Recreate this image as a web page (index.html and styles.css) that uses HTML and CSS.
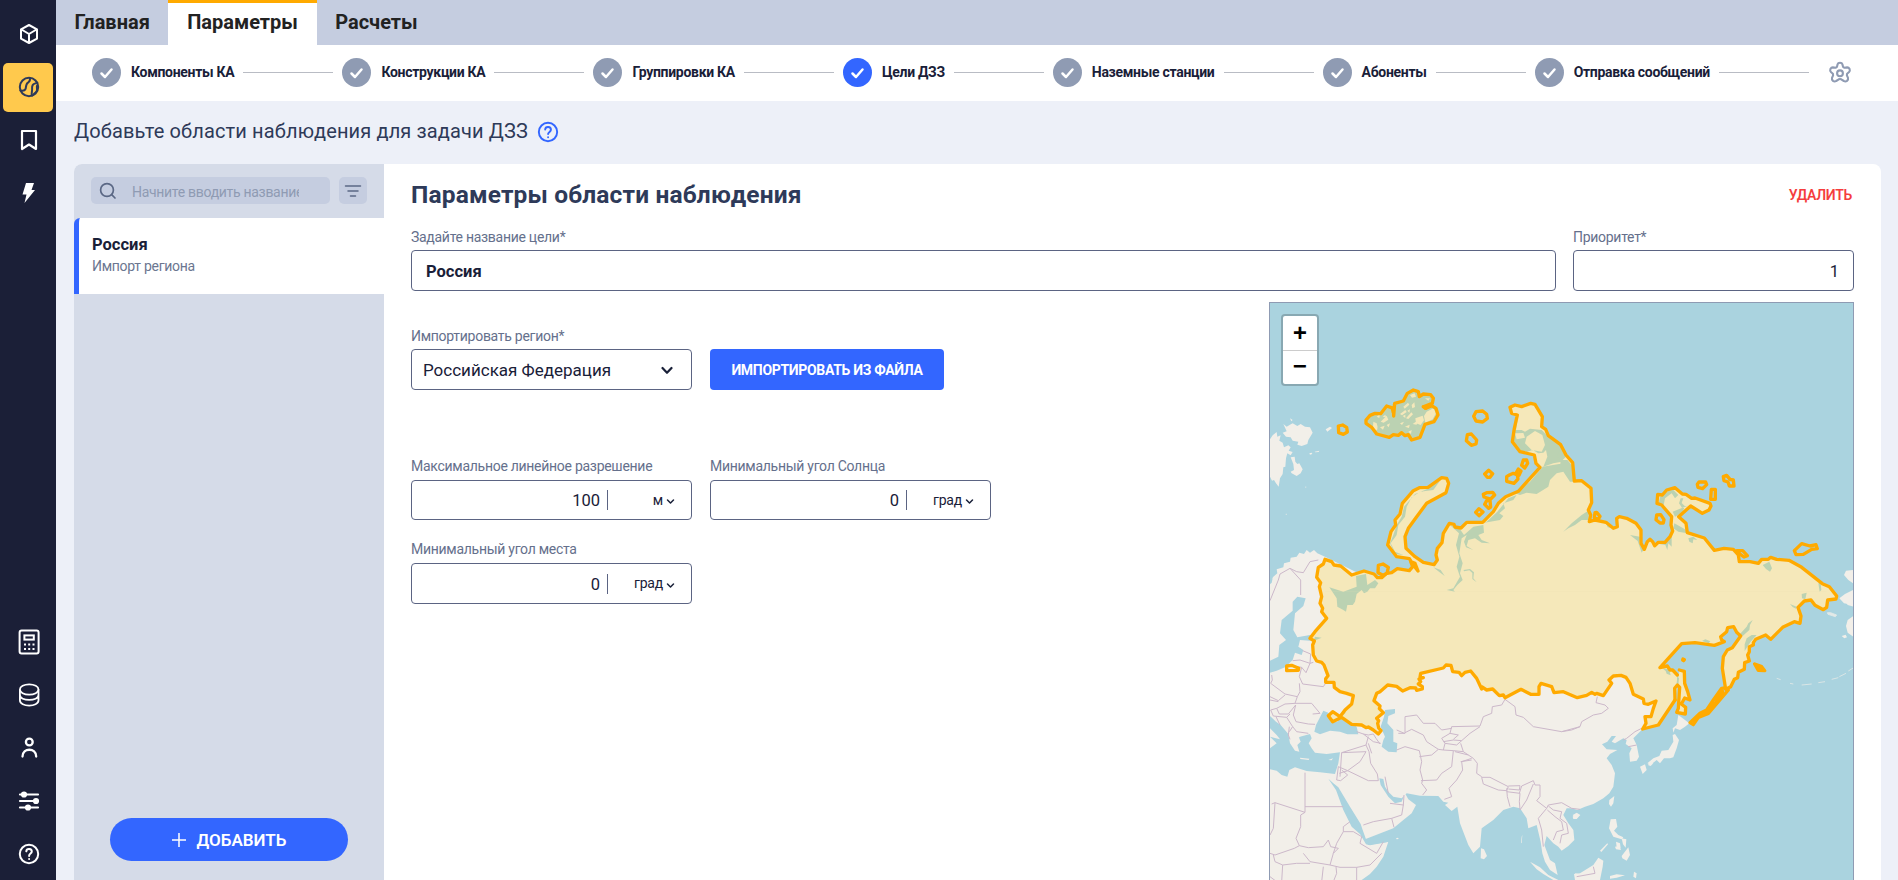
FILE: index.html
```html
<!DOCTYPE html>
<html lang="ru">
<head>
<meta charset="utf-8">
<title>Параметры — Цели ДЗЗ</title>
<link rel="stylesheet" href="styles.css">
</head>
<body>
<div class="app">
  <nav class="sidebar">
    <a class="nav-item"><svg width="24" height="24" viewBox="0 0 24 24" fill="none" stroke="#fff" stroke-width="2" stroke-linejoin="round"><path d="M12 3l8 4.300v9.400L12 21l-8-4.300V7.300zM4.500 7.500L12 12l7.500-4.500M12 12v9"/></svg></a>
    <a class="nav-item nav-item--active"><svg width="24" height="24" viewBox="0 0 24 24" fill="none" stroke="#2e3a59" stroke-width="2" stroke-linecap="round" stroke-linejoin="round"><circle cx="12" cy="12" r="9.200"/><path d="M3.500 15.500c3.500.5 5-.3 5.300-2.500.3-2.500.2-4.500 2.500-5.700 1.500-.8 1.900-2 1.700-4.200M15 20.700c-.9-3 .3-4.300.1-6.500-.2-2.500 0-5 2.600-5.600 1.300-.3 2.200-.6 2.600-1.100M17 19c.8-1.500 2.800-1.500 3-4 .2-2-.6-3 .2-4.500"/></svg></a>
    <a class="nav-item"><svg width="24" height="24" viewBox="0 0 24 24" fill="none" stroke="#fff" stroke-width="2.200" stroke-linejoin="round"><path d="M5 3h14v18l-7-4.500L5 21z"/></svg></a>
    <a class="nav-item"><svg width="24" height="24" viewBox="0 0 24 24" fill="#fff"><path d="M9 2h8l-2.500 7H18L7.500 22 9.500 13.500H5.500z"/></svg></a>
    <div class="nav-spacer"></div>
    <a class="nav-item"><svg width="24" height="28" viewBox="0 0 24 28" fill="none" stroke="#fff" stroke-width="2"><rect x="2.600" y="2.500" width="19" height="23" rx="2"/><rect x="7.400" y="7.400" width="9.400" height="4.200"/><g stroke-width="2"><path d="M7 16.500h2M11.200 16.500h2M15.500 16.500h2M7 21h2M11.200 21h2M15.500 21h2"/></g></svg></a>
    <a class="nav-item"><svg width="24" height="24" viewBox="0 0 24 24" fill="none" stroke="#fff" stroke-width="1.800"><ellipse cx="12.200" cy="6.500" rx="9.300" ry="5.200"/><path d="M2.900 6.500v10.800c0 7 18.600 7 18.600 0V6.500M2.900 12c0 6.600 18.600 6.600 18.600 0"/></svg></a>
    <a class="nav-item"><svg width="24" height="24" viewBox="0 0 24 24" fill="none" stroke="#fff" stroke-width="2.300" stroke-linecap="round"><circle cx="12.300" cy="6" r="3.400"/><path d="M5.500 20.500c0-9 13.700-9 13.700 0"/></svg></a>
    <a class="nav-item"><svg width="24" height="24" viewBox="0 0 24 24" fill="#fff" stroke="#fff" stroke-width="2.200" stroke-linecap="round"><path d="M3 5.500h18M3 12h18M3 18.500h18"/><circle cx="7" cy="5.500" r="2"/><circle cx="19" cy="12" r="2"/><circle cx="11" cy="18.500" r="2"/></svg></a>
    <a class="nav-item"><svg width="24" height="24" viewBox="0 0 24 24" fill="none" stroke="#fff" stroke-width="2" stroke-linecap="round"><circle cx="12" cy="12" r="9.200"/><path d="M9.300 9.300c.3-3.300 5.600-3 5.500.3 0 2-2.700 2-2.700 4.300M12.100 16.900v.1"/></svg></a>
  </nav>

  <main class="main">
    <header class="tabs">
      <a class="tab">Главная</a>
      <a class="tab tab--active">Параметры</a>
      <a class="tab">Расчеты</a>
    </header>

    <section class="stepper">
      <div class="step"><span class="dot"><svg width="15" height="12" viewBox="0 0 15 12"><path d="M2.500 6.500l3.500 3.500 6.500-7.500"/></svg></span><b>Компоненты КА</b></div><i class="line"></i>
      <div class="step"><span class="dot"><svg width="15" height="12" viewBox="0 0 15 12"><path d="M2.500 6.500l3.500 3.500 6.500-7.500"/></svg></span><b>Конструкции КА</b></div><i class="line"></i>
      <div class="step"><span class="dot"><svg width="15" height="12" viewBox="0 0 15 12"><path d="M2.500 6.500l3.500 3.500 6.500-7.500"/></svg></span><b>Группировки КА</b></div><i class="line"></i>
      <div class="step"><span class="dot dot--current"><svg width="15" height="12" viewBox="0 0 15 12"><path d="M2.500 6.500l3.500 3.500 6.500-7.500"/></svg></span><b>Цели ДЗЗ</b></div><i class="line"></i>
      <div class="step"><span class="dot"><svg width="15" height="12" viewBox="0 0 15 12"><path d="M2.500 6.500l3.500 3.500 6.500-7.500"/></svg></span><b>Наземные станции</b></div><i class="line"></i>
      <div class="step"><span class="dot"><svg width="15" height="12" viewBox="0 0 15 12"><path d="M2.500 6.500l3.500 3.500 6.500-7.500"/></svg></span><b>Абоненты</b></div><i class="line"></i>
      <div class="step"><span class="dot"><svg width="15" height="12" viewBox="0 0 15 12"><path d="M2.500 6.500l3.500 3.500 6.500-7.500"/></svg></span><b>Отправка сообщений</b></div><i class="line"></i>
      <svg class="gear" width="24" height="24" viewBox="0 0 24 24" fill="none" stroke="#8f9bb3" stroke-width="2.100" stroke-linejoin="round"><circle cx="12" cy="12.300" r="2.900"/><path d="M9.600 3.300Q10 1.700 12 1.700t2.400 1.600l.7 2.600 1.400.9 2.700-.4q1.500 0 2.400 1.700.7 1.900-.5 2.900l-2 1.700-.2 1.600 1.100 2.500q.5 1.800-1 3.100-1.600 1.100-3.100.1L13.200 18.300q-1.200-.6-2.400 0L8.100 20q-1.500 1-3.100-.1-1.500-1.300-1-3.100l1.100-2.500-.2-1.600-2-1.700q-1.200-1-.5-2.900.9-1.700 2.400-1.700l2.700.4 1.400-.9z"/></svg>
    </section>

    <h1 class="page-title">Добавьте области наблюдения для задачи ДЗЗ
      <svg width="22" height="22" viewBox="0 0 24 24" fill="none" stroke="#3366ff" stroke-width="2.100" stroke-linecap="round"><circle cx="12" cy="12" r="10"/><path d="M8.900 9.300c.3-4 6.400-3.600 6.300.3 0 2.300-3.100 2.300-3.100 4.700M12.100 17.600v.1"/></svg>
    </h1>

    <section class="card">
      <aside class="list">
        <div class="search-row">
          <div class="search"><svg width="18" height="18" viewBox="0 0 18 18" fill="none" stroke="#5b6885" stroke-width="1.700" stroke-linecap="round"><circle cx="8" cy="8" r="6.400"/><path d="M12.700 12.700L16 16"/></svg><input class="search-input" placeholder="Начните вводить название"></div>
          <div class="filter"><svg width="18" height="14" viewBox="0 0 18 14" stroke="#5b6885" stroke-width="1.500" stroke-linecap="round"><path d="M1.500 2h15M4 7h10M6.500 12h5"/></svg></div>
        </div>
        <div class="target"><strong>Россия</strong><span>Импорт региона</span></div>
        <button class="add"><svg width="14" height="14" viewBox="0 0 14 14" stroke="#fff" stroke-width="1.500"><path d="M7 0v14M0 7h14"/></svg>ДОБАВИТЬ</button>
      </aside>

      <div class="details">
        <div class="details-head"><h2>Параметры области наблюдения</h2><a class="delete">УДАЛИТЬ</a></div>
        <div class="name-row">
          <div class="field field--name"><label>Задайте название цели*</label><div class="input input--name">Россия</div></div>
          <div class="field"><label>Приоритет*</label><div class="input input--number">1</div></div>
        </div>
        <div class="body-row">
          <div class="form">
            <div class="form-row form-row--region">
              <div class="field"><label>Импортировать регион*</label><div class="input select">Российская Федерация<svg width="12" height="9" viewBox="0 0 12 9" fill="none" stroke="#192038" stroke-width="2.200" stroke-linecap="round" stroke-linejoin="round"><path d="M1.500 2L6 6.800 10.500 2"/></svg></div></div>
              <button class="import">ИМПОРТИРОВАТЬ ИЗ ФАЙЛА</button>
            </div>
            <div class="form-row form-row--limits">
              <div class="field"><label>Максимальное линейное разрешение</label><div class="input unit"><span class="value">100</span><span class="measure">м<svg width="9" height="7" viewBox="0 0 9 7"><path d="M1.500 2l3 3 3-3"/></svg></span></div></div>
              <div class="field"><label>Минимальный угол Солнца</label><div class="input unit"><span class="value">0</span><span class="measure">град<svg width="9" height="7" viewBox="0 0 9 7"><path d="M1.500 2l3 3 3-3"/></svg></span></div></div>
            </div>
            <div class="form-row form-row--place">
              <div class="field"><label>Минимальный угол места</label><div class="input unit"><span class="value">0</span><span class="measure">град<svg width="9" height="7" viewBox="0 0 9 7"><path d="M1.500 2l3 3 3-3"/></svg></span></div></div>
            </div>
          </div>

          <div class="map">
            <svg class="map-canvas" width="583" height="577" viewBox="30 39 1749 1731">
              <defs>
                <path id="mainland" d="M1245 1230L1195 1305 1148 1317 1158 1300 1155 1280 1173 1280 1180 1255 1188 1233 1165 1243 1152 1240 1150 1227 1120 1213 1110 1180 1098 1162 1083 1156 1060 1158 1047 1170 1055 1180 1030 1217 1010 1210 1005 1213 995 1207 980 1216 952 1223 910 1205 882 1208 875 1190 843 1180 837 1190 837 1213 812 1213 783 1198 735 1223 730 1215 718 1217 698 1197 680 1200 665 1190 665 1197 650 1165 632 1143 615 1147 605 1157 597 1147 578 1145 573 1126 558 1125 550 1134 482 1150 480 1162 490 1163 477 1167 482 1175 475 1182 487 1190 487 1197 470 1201 467 1194 450 1193 428 1203 410 1189 383 1185 360 1205 350 1210 342 1232 360 1248 358 1256 370 1268 350 1285 356 1292 353 1300 356 1314 363 1322 355 1332 340 1320 325 1311 318 1313 305 1305 275 1303 245 1282 218 1295 205 1277 218 1265 240 1280 255 1260 275 1242 280 1217 260 1210 240 1205 223 1192 222 1177 197 1177 197 1166 204 1157 192 1125 185 1117 170 1113 160 1095 158 1065 163 1053 150 1045 165 1025 200 985 185 965 188 955 180 940 185 920 178 890 182 878 170 862 175 832 190 822 195 808 215 815 222 825 242 828 275 855 312 843 342 852 352 863 365 863 380 850 395 848 412 836 448 842 458 830 452 815 465 820 474 843 460 825 448 806 410 800 383 765 393 725 407 705 405 690 420 672 427 640 460 602 478 593 504 592 545 563 560 565 566 580 558 608 500 640 470 680 445 715 435 740 438 775 465 800 490 817 522 824 532 810 528 795 532 775 546 758 550 730 568 700 582 703 585 711 603 714 620 697 668 697 700 665 715 640 737 620 775 604 840 532 828 520 823 495 780 485 757 455 763 415 772 375 755 370 750 352 765 345 785 350 812 340 825 343 847 380 845 410 857 418 865 437 902 464 918 495 938 518 943 573 965 572 993 595 995 638 985 660 992 675 988 695 1005 690 1038 697 1060 715 1072 710 1070 685 1078 680 1100 685 1128 700 1143 720 1143 760 1153 778 1162 755 1170 748 1178 755 1184 767 1195 757 1215 757 1230 740 1238 723 1233 705 1235 680 1205 645 1191 640 1193 613 1207 615 1220 600 1245 593 1267 612 1278 613 1295 625 1305 624 1350 640 1353 648 1347 660 1327 670 1292 648 1256 680 1278 700 1282 728 1333 744 1363 781 1392 775 1420 778 1435 795 1438 815 1470 815 1495 820 1505 808 1525 808 1532 802 1550 808 1587 811 1625 832 1687 881 1708 890 1730 918 1728 927 1703 930 1700 952 1690 959 1665 946 1653 930 1633 933 1614 952 1623 978 1620 1000 1603 995 1568 1012 1532 1048 1517 1035 1487 1048 1480 1058 1480 1065 1468 1070 1468 1085 1463 1095 1468 1113 1454 1118 1453 1138 1435 1147 1433 1163 1423 1168 1412 1190 1397 1198 1387 1135 1390 1100 1402 1080 1417 1073 1442 1038 1430 1027 1421 1010 1403 1013 1400 1025 1382 1040 1385 1050 1393 1055 1363 1066 1305 1058 1265 1061 1200 1133 1222 1128 1230 1140 1238 1140 1252 1155"/>
                <path id="sakhalin" d="M1258 1140L1273 1144 1274 1180 1283 1205 1290 1230 1274 1224 1264 1242 1277 1252 1276 1272 1250 1267 1255 1255 1259 1192 1252 1185 1244 1195 1245 1230"/>
              </defs>
              <rect x="30" y="39" width="1749" height="1731" fill="#aad3df"/>
              <!-- continents -->
              <g fill="#f2efe9">
                <path d="M30 875L40 860 52 850 50 838 70 832 72 820 90 815 92 803 110 800 118 788 132 792 140 780 150 788 162 780 172 790 195 800 600 1000 1100 1100 1200 1133 1252 1155 1245 1230 1195 1305 1148 1317 1135 1330 1120 1345 1130 1365 1137 1400 1130 1412 1110 1415 1108 1390 1115 1375 1097 1362 1100 1350 1090 1345 1065 1360 1055 1355 1068 1338 1055 1338 1042 1355 1026 1363 1040 1378 1072 1380 1050 1392 1040 1405 1055 1425 1065 1450 1060 1490 1048 1510 1030 1525 1000 1542 975 1550 952 1560 935 1555 920 1555 910 1575 925 1600 940 1620 943 1650 925 1668 905 1682 895 1670 880 1660 860 1638 853 1665 870 1710 885 1720 893 1755 870 1740 855 1715 847 1690 842 1655 830 1605 805 1615 800 1585 780 1555 760 1550 730 1560 700 1590 665 1615 660 1670 640 1690 625 1665 600 1600 592 1550 575 1563 555 1545 565 1538 550 1535 535 1518 480 1517 440 1510 425 1525 400 1520 385 1505 375 1490 370 1467 358 1465 362 1485 385 1520 405 1540 425 1535 435 1510 445 1528 468 1545 455 1570 430 1590 400 1615 315 1648 325 1665 385 1655 370 1700 350 1730 330 1752 305 1770H30Z"/>
                <path d="M30 448L38 436 50 426 52 440 62 436 58 452 68 458 72 472 85 466 92 472 86 482 98 486 92 496 82 490 78 505 76 530 70 532 68 552 60 565 56 590 48 580 42 570 36 572 30 560ZM70 402L80 410 90 404 98 400 112 408 122 402 135 410 150 412 158 428 150 442 145 450 142 462 125 468 112 464 115 455 98 452 92 442 78 440 68 428 80 424ZM92 502L104 500 106 515 112 522 118 520 128 538 122 550 110 558 95 550 92 545 102 540 100 522ZM197 418L210 410 216 414 202 425ZM148 490l7-2 2 4-7 2zM164 485l14-3-2 4-10 1zM76 672l4-1v4zM135 590l4 0-1 4zM90 385l8 5-4 4z"/>
                <!-- island chains of the Pacific coast -->
                <g transform="translate(900,930)">
                  <path d="M355 345L362 350 388 370 375 380 360 390 345 385 340 398 338 385 350 375ZM345 402L357 420 350 445 340 472 330 475 312 475 300 490 290 480 275 492 262 490 280 475 298 468 305 452 325 450 340 425 338 405ZM240 500L255 493 260 510 248 522ZM265 488l15 2-8 8-7-2zM148 600L163 588 160 610 153 620 147 612ZM38 650L50 638 61 645 50 657 40 657ZM152 658L168 657 172 680 162 692 175 705 190 712 185 718 160 710 147 685ZM168 725l12 5 2 15-12-3zM185 715l14 3-2 25-8-10zM165 740l13-2 5 12-15-2zM185 768L205 742 210 765 200 782 187 775ZM120 752l22-22 2 3-20 23zM42 822L60 820 100 795 115 773 130 782 128 800 120 840H45ZM150 828l20-5 25 3-25 7-20 3zM222 815l8 5-2 15-8-5zM853 0l10 15 18 5V-20zM880 48l-17 12-5 18 5 20 17 12zM845 108l12-4 4 8-8 3z"/>
                  <path d="M802 38L812 38 830 45 826 50 804 43ZM650 235l12 4M690 250l10 2M725 255l30-3M775 248l20-3M815 238l20-5M838 230l20-10M865 213l16-10" stroke="#f2efe9" stroke-width="2.500" opacity=".8"/>
                </g>
                <path d="M1779 840L1758 842 1752 855 1765 870 1779 880ZM1779 900L1755 912 1738 925 1752 940 1779 945Z"/>
                <g transform="translate(0,870)"><path d="M663 805L672 808 681 828 672 838 662 835ZM810 845L840 862 865 885 895 900H880L850 882 830 868ZM938 705L948 700 958 705 948 717ZM785 770l2-5-2 25-2-2zM408 775l6-2 2 4-6 1zM945 880l12 2v8l-10-2z"/></g>
              </g>
              <!-- inland seas -->
              <g transform="translate(0,870)" fill="#aad3df">
                <path d="M30 408L48 425 62 435 85 462 92 478 105 483 120 470 150 462 155 475 146 490 155 505 165 518 200 522 240 517 235 550 225 582 180 577 140 573 105 562 88 570 82 590 65 585 50 572 30 568V505L50 490 30 470 60 478 50 465 30 445Z"/>
                <path d="M190 392L205 398 215 425 232 425 240 402 262 388 255 408 250 415 290 440 295 463 262 463 240 455 210 452 180 463 163 455 168 435ZM375 390L405 387 405 400 385 408 382 430 400 450 400 485 412 490 410 517 385 515 365 500 370 480 375 470 362 440 372 410Z"/>
                <path d="M112 50L137 55 130 78 105 100 100 150 112 172 150 165 185 170 150 182 120 180 115 200 130 210 125 225 105 218 98 240 75 262 50 272 30 278V242L55 230 58 195 78 180 60 160 65 120 98 92 98 65Z"/>
                <path d="M205 596L220 610 235 622 270 680 302 732 308 750 318 778 390 765 388 785 330 796 318 793 300 762 275 740 250 690 228 630Z"/>
                <path d="M30 0l8-5-3 13-5 5z"/>
              </g>
              <g transform="translate(0,870)" fill="#f2efe9"><path d="M85 462L115 468 122 485 112 495 118 515 105 512 90 490ZM120 533l28 3-2 4-25-3zM205 540l14-5-4 6zM165 465h-8l25-3z"/></g>
              <!-- country borders -->
              <g transform="translate(0,870)" fill="none" stroke="#ccb8ca" stroke-width="3" stroke-linejoin="round">
                <path d="M30 62L55 0 60-18 90-35 122 0V45M90-35L110-25 130-22 150-55 175-60M98 242L120 240 150 250 152 222 128 212M150 250L160 247M100 258L125 262 138 278 150 250M125 262L118 290 128 312 190 320 200 305M35 285L37 300 32 310 75 342 112 350 120 335 118 310M30 350L55 362 75 345M112 350L105 370 75 372 50 385 58 402 85 402 107 375M105 370L155 370 180 400 158 402M107 375L100 405 108 425 145 432 165 433M30 360L55 365M50 385L32 390 40 408 80 412 98 440 88 455M60 435L48 410M80 412L90 402M98 440L110 455 145 460M88 440L85 465 90 478"/>
                <path d="M290 455L310 462 340 485 362 490M310 462L325 465 340 462 348 475 360 492M325 470L318 495 245 518 240 590M318 515L245 518M318 495L327 515 332 550 352 582 355 602 325 602 263 572 238 580M263 572L235 560 230 600 242 602 263 585 245 570M263 572L300 545 318 515M325 490L335 520M410 510L435 500 478 512 485 545 480 570 488 600 485 610 500 630 488 645M415 460H435V410L470 405 490 430 525 430 545 450 575 445M435 458L455 448 490 465 500 485 535 508 550 510M433 460L410 450M478 530L515 525 535 508M550 510L555 490 545 475 570 460 575 440 660 438 670 410 695 400 697 380 725 375 735 358M550 485L580 480 605 482 590 495 555 490M570 460L595 465 580 478M605 482L630 460 660 440M550 510L580 512 575 560 545 580 530 600 483 602M580 512L610 515 602 490M585 515L625 525M610 515L640 535 652 550 650 580 665 590M602 545L635 540M635 535L605 545 608 570 590 600 567 625 575 650 553 658M665 592L690 592 745 620 740 632 715 630 670 612ZM745 618L780 617 778 630 745 627M740 625L742 650 750 680M740 635L780 640 778 665 780 688M778 640L785 618 820 602 825 615 840 615 840 650 830 662 860 685 865 675 905 668 935 685 960 688M780 690L800 660 820 612M860 685L835 715 845 750 850 800M862 690L885 710 905 725 910 750 890 755 880 780M865 678L880 690 905 695 900 715 920 730 925 760 905 765 900 790M735 358L765 380 768 405 790 412 820 440 905 455 960 440"/>
                <path d="M135 578V697L45 668 35 672M135 680H250M135 697L122 705V740L108 775 118 797 103 805 45 825 30 820M118 797L145 803 190 800 205 780 212 800 235 805 220 820 210 855 150 845 130 820M45 668L40 745 30 765M220 820L230 790 250 755 280 755 305 770 300 790 350 820 370 785M250 755V740L270 725M210 855L240 862 290 862V900M290 862L330 855 365 820M220 905L230 880 228 860M190 860L185 905M65 905L68 855 45 845 40 825M68 855L110 850 150 850M30 890L50 905M310 735L340 725 395 715 425 705 430 675 390 670M395 715L402 742M430 675L432 645M375 590L385 640"/>
                <path d="M1145 445L1125 455 1100 475 1090 480M1105 500L1130 495M905 455L935 450 960 440 965 425 1000 405 1025 400 1045 385 1035 375 1008 368 1012 350M1000 860L1005 880 950 890"/>
              </g>
              <g fill="#f5e8ba"><use href="#mainland"/><use href="#sakhalin"/></g>
              <!-- archipelagos -->
              <path d="M318 390L345 370 362 368 380 350 403 340 430 333 442 310 460 300 485 312 515 320 520 345 530 355 530 380 495 403 480 442 455 450 425 432 388 442 350 432Z" fill="#bbd2b2"/>
              <path d="M500 365l20-10 8 15-10 18-22 10-4-20zM466 385l22-8 4 14-10 14-14-5zM350 380l10-8-2 12zM362 395l18-18 5 12-14 9zM340 395l10 5 3 12-8 10-6-12zM360 412l14-5-5 12zM380 405l10-5-4 12zM430 350l14-12 4 6-14 12zM420 372l16-12 4 6-14 10zM438 385l16-18 5 6-14 14zM455 345l8-8 2 14-8 4zM420 400l12-5-6 10zM435 410l14-6-2 10zM458 402l14-10-2 12zM450 315l14-5 4 10-12 3zM495 325l15 0-5 7zM445 425l10-5-2 12zM368 380l8-6 2 8zM345 408l8 8-4 6zM428 378l8-4 0 10zM442 362l8-4-2 10z" fill="#f5e8ba"/>
              <!-- lowland water seen through the region fill -->
              <g fill="#bbd2b2">
                <path d="M390 760L400 735 410 705 425 680 432 650 465 612 500 598 540 572 520 600 480 605 455 622 440 650 435 680 415 705 410 735 392 760 405 785 430 795 405 792ZM570 705L600 718 612 735 640 710 670 705 672 728 655 735 665 750 690 760 665 758 645 745 625 750 620 768 640 780 618 772 612 755 620 735 605 745 598 790 608 820 600 850 608 870 592 885 580 900 585 905 560 900 580 895 600 860 590 830 598 800 588 765 597 730ZM610 840l20-3 12 10-2 18 10 12-13-10 0-18-9-8-15 3zM520 832l22 8 12 18-20-15zM288 858L318 852 322 885 345 870 355 880 345 895 330 895 322 905 312 910 305 900 290 912 285 935 278 945 262 945 258 965 250 960 232 950 230 925 208 892 250 905 290 890Z"/>
                <path d="M765 375L775 378 768 420 785 420 795 425 810 416 845 420 855 430 870 445 880 440 885 450 905 470 915 495 905 515 880 520 850 530 862 500 858 480 850 488 835 490 818 480 800 486 780 482 760 455ZM765 430l5 18 25-5-5-14zM800 440l-5 20 20 20 30 5 10-20-8-30-22-12z" fill-rule="evenodd"/>
                <path d="M848 530L910 520 935 525 940 575 930 575 910 545 890 550 870 570 865 590 830 612 800 608 780 615 765 610 790 590 810 575ZM770 615L745 625 712 665 680 695 665 700 720 690 730 678 718 670 735 655 730 640 760 630ZM910 725L935 700 965 675 988 660 985 690 965 690 945 705 925 715ZM890 500L905 470 918 500 908 510ZM902 510h20l18 20v40l-15-5-10-25-15-8z"/>
                <path d="M1200 620L1195 645 1210 650 1215 625 1235 610 1245 625 1255 615 1235 595 1215 610ZM1238 665L1275 650 1265 670 1245 680ZM1262 625l-5 15 10 15 16-8-8 2-10-10 5-14zM1243 700L1275 718 1282 730 1255 725 1240 715ZM1185 760l25-5 20-15 5-10 0 40-10-10-3 20-6-15zM1285 745l15-5 12 10-12-2-2 12-10-5zM1110 735l30 5-2 20 12 20-5 8-12-35zM1038 700l20 15-15-3zM1508 825l20-10 8 20-6 10-12-8zM1675 880l4 25 5-5-2-22zM1625 912l15-4-4 20-10-3zM1590 942l20 8-2 6-10-5zM1465 1000L1478 990 1470 1005 1468 1020 1448 1038 1440 1032 1460 1010ZM1460 1045l15-10 15 0-18 20-18 28 0-20zM1326 1053l10-5 15 6-5 6zM1207 1135l20 3 5 18-12-5-3-8zM1252 1160l5 5-2 20-5-5z"/>
                <path d="M165 1040l20 3-25 10zM245 1275l15-15-6 12z"/>
              </g>
              <path d="M195 904H1700" stroke="#eee2b6" stroke-width="1" opacity=".5"/>
              <!-- region outline -->
              <g fill="none" stroke="#ffaa00" stroke-width="10" stroke-linejoin="round" stroke-linecap="round">
                <use href="#mainland"/><use href="#sakhalin"/>
                <path d="M318 390L330 376 345 370 362 371 380 348 400 355 401 378 404 340 430 333 442 310 460 300 475 305 478 320 490 312 512 314 520 325 517 340 492 350 498 355 515 347 528 355 534 375 522 395 495 403 480 442 455 450 445 434 435 437 425 428 415 436 400 434 388 442 350 432 335 412 318 400Z"/>
                <path d="M235 408l13-3 12 7 2 14-12 7-14-5zM648 365l20-2 12 10 2 12-14 11-20-3-7-14zM622 434l12-2 16 18-2 12-14 4-15-14zM686 541l12 10-8 11h-8l-8-10zM790 510h10l3 10-9 14-9-8zM748 555l12-5 12 5 2 12-12 13-22-6 0-14zM775 537l8 6-6 13-8-8zM680 608l18-1 6 8-12 12-20-6-2-8zM680 632l10-1 2 20-6 4-12-12zM657 656l12 10-12 11-10-10zM355 826l14-4 16 10-4 18-12 6-15-8z"/>
                <path d="M1005 668l5-1 10 12-5 8-12-3zM1190 675l12-1 10 15-2 10-10 0-12-10zM1354 598h12v30h-14zM1390 560l10-4 10 12 10 2 2 18h-14l-4-12-12-4zM1312 583l5-7h20l3 8-12 12-14-4zM1430 782l18 0 14 15-10 4-14-10zM1603 782L1625 761 1650 768 1668 764 1672 776 1655 778 1630 793 1608 794ZM80 1128L95 1126 116 1135 115 1141 80 1142Z"/>
                <path d="M1394 1194L1385 1195 1360 1230 1340 1260 1320 1270 1290 1298 1300 1304 1315 1282 1345 1270 1375 1235 1405 1200M1388 1204L1366 1240 1340 1264 1318 1276"/>
                <path d="M1484 1122L1505 1130 1514 1142 1495 1141ZM1269 1107l4 2-2 3-3-2zM490 350l10 0-4 5zM397 355l3 12" fill="#ffaa00"/>
              </g>
            </svg>
            <div class="zoom"><span class="zoom-btn">+</span><span class="zoom-btn">−</span></div>
          </div>
        </div>
      </div>
    </section>
  </main>
</div>
</body>
</html>
```

FILE: styles.css
```css
* { box-sizing: border-box; }
body { margin: 0; font-family: Roboto, "Liberation Sans", sans-serif; color: #192038; }
h1, h2 { margin: 0; }
button { border: 0; padding: 0; font-family: inherit; color: #fff; background: #3366ff; }
svg { display: block; flex: none; }

.app { display: flex; height: 880px; overflow: hidden; background: #edf0f8; }

.sidebar { width: 56px; flex: none; display: flex; flex-direction: column; align-items: center; gap: 4px; padding-top: 10px; padding-bottom: 1px; background: #1b1f37; }
.nav-item { width: 50px; height: 49px; flex: none; display: flex; align-items: center; justify-content: center; border-radius: 5px; padding: 0 0 1px 2px; }
.nav-item--active { background: #ffc94d; }
.nav-spacer { flex: 1; }

.main { flex: 1; min-width: 0; display: flex; flex-direction: column; }
.tabs { display: flex; height: 45px; background: #c5cde0; }
.tab { height: 45px; padding: 0 18.5px; font-size: 20px; font-weight: 700; line-height: 45px; color: #222; }
.tab--active { background: #fff; border-top: 3px solid #ffaa00; line-height: 39px; padding: 0 18.800px; }

.stepper { height: 56px; flex: none; display: flex; align-items: center; padding: 0 46px 1px 36px; background: #fff; }
.step { display: flex; align-items: center; gap: 10px; font-size: 14px; letter-spacing: -.3px; white-space: nowrap; }
.step b { font-weight: 700; padding-bottom: 1px; }
.dot { width: 29px; height: 29px; border-radius: 50%; background: #8f9bb3; display: flex; align-items: center; justify-content: center; }
.dot--current { background: #3366ff; }
.dot path { fill: none; stroke: #fff; stroke-width: 2.500; stroke-linecap: round; stroke-linejoin: round; }
.line { flex: 1; height: 1px; margin: 0 9px; background: #b9bcc4; }
.gear { margin-left: 10px; }

.page-title { height: 63px; flex: none; display: flex; align-items: center; gap: 9px; padding: 0 0 3px 18px; font-size: 20px; font-weight: 400; letter-spacing: .13px; color: #2e3a59; }
.page-title svg { margin-top: 2px; }

.card { flex: 1; min-height: 0; display: flex; margin: 0 17px 0 18px; border-radius: 8px 8px 0 0; overflow: hidden; background: #fff; }
.list { width: 310px; flex: none; display: flex; flex-direction: column; background: #d5dbe8; }
.search-row { display: flex; gap: 9px; padding: 13px 17px 14px; }
.search { width: 239px; height: 27px; display: flex; align-items: center; padding: 0 31px 0 8px; gap: 15px; border-radius: 5px; background: #c5cde0; }
.search-input { flex: 1; min-width: 0; border: 0; padding: 2px 0 0; background: none; font: 14px/18px Roboto, "Liberation Sans", sans-serif; letter-spacing: -.3px; }
.search-input::placeholder { color: #8f9bb3; opacity: 1; }
.filter { width: 28px; height: 27px; display: flex; align-items: center; justify-content: center; border-radius: 5px; background: #c5cde0; }
.target { height: 76px; display: flex; flex-direction: column; padding: 16px 0 0 13px; border-left: 5px solid #3366ff; border-top-left-radius: 6px; background: #fff; }
.target strong { font-size: 16.500px; line-height: 21px; }
.target span { font-size: 14px; line-height: 22px; letter-spacing: -.28px; color: #6b7690; }
.add { width: 238px; height: 43px; display: flex; align-items: center; justify-content: center; gap: 11px; margin: auto auto 19px 36px; border-radius: 22px; font-size: 17px; font-weight: 600; }

.details { flex: 1; min-width: 0; display: flex; flex-direction: column; padding: 0 27px; }
.details-head { height: 65px; flex: none; display: flex; align-items: center; justify-content: space-between; padding-bottom: 3px; }
h2 { font-size: 24.500px; font-weight: 700; line-height: 62px; letter-spacing: .15px; color: #2e3a59; }
.delete { font-size: 14px; font-weight: 600; letter-spacing: -.3px; color: #f53d3d; padding-right: 2px; }
.name-row { display: flex; gap: 17px; flex: none; }
.field { width: 281px; flex: none; }
.field--name { flex: 1; }
label { display: block; font-size: 14px; line-height: 16px; margin-bottom: 5px; letter-spacing: -.28px; color: #65708c; white-space: nowrap; }
.input { height: 41px; display: flex; align-items: center; border: 1px solid #5b6483; border-radius: 4px; background: #fff; font-size: 16.500px; }
.input--name { padding: 1px 0 0 14px; font-weight: 700; }
.input--number { justify-content: flex-end; padding: 1px 14px 0 0; }
.select { justify-content: space-between; padding: 1px 18px 0 11px; font-size: 17px; }

.body-row { flex: 1; min-height: 0; display: flex; justify-content: space-between; padding-top: 11px; }
.form { padding-top: 26px; }
.form-row { display: flex; gap: 18px; }
.form-row--region { align-items: flex-end; margin-bottom: 68px; }
.form-row--limits { margin-bottom: 21px; }
.form-row--limits .input { height: 40px; }
.form-row--limits label, .form-row--place label { margin-bottom: 6px; }
.import { width: 234px; height: 41px; border-radius: 4px; font-size: 14px; font-weight: 700; letter-spacing: -.32px; }
.unit .value { width: 196px; height: 20px; padding-right: 7px; border-right: 1px solid #5b6483; text-align: right; line-height: 21px; }
.unit .measure { flex: 1; display: flex; align-items: center; justify-content: flex-end; gap: 3px; padding: 0 16px 1px 0; font-size: 14px; letter-spacing: -.2px; }
.measure svg { margin-top: 4px; }
.measure path { fill: none; stroke: #192038; stroke-width: 1.500; stroke-linecap: round; stroke-linejoin: round; }

.map { position: relative; width: 585px; height: 600px; flex: none; border: 1px solid #8f9bb3; background: #aad3df; overflow: hidden; }
.zoom { position: absolute; left: 11px; top: 11px; width: 38px; border: 2px solid rgba(0, 0, 0, .2); border-radius: 4px; background: #fff; background-clip: padding-box; }
.zoom-btn { display: block; height: 34px; font: bold 24px/38px "Liberation Mono", monospace; text-align: center; color: #000; }
.zoom-btn + .zoom-btn { height: 34px; line-height: 34px; border-top: 1px solid #ccc; }
```
